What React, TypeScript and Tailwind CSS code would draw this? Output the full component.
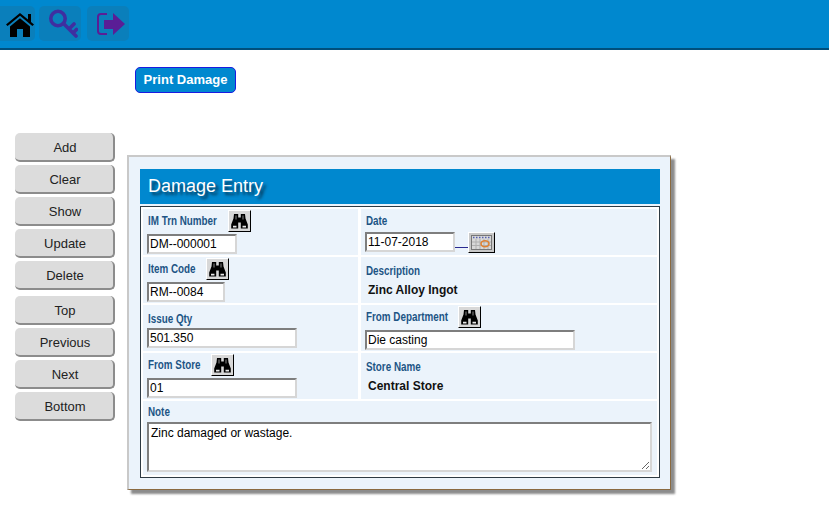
import React from "react";

const Tile = ({ children, className }: { children: React.ReactNode; className: string }) => (
  <div className={`flex h-[35px] items-center justify-center rounded-[5px] bg-[#0a7fbb] ${className}`}>{children}</div>
);

const SideBtn = ({ label, className }: { label: string; className?: string }) => (
  <button className={`h-[29px] w-[100px] rounded-[5px] border-r-2 border-b-2 border-[#8c8c8c] bg-[#dcdcdc] pl-[2px] pt-[2px] text-center text-[13px] leading-[24px] text-[#222] ${className ?? ""}`}>
    {label}
  </button>
);

const Bino = () => (
  <button className="flex h-[22px] w-[23px] items-center justify-center border border-t-white border-l-white border-r-black border-b-black bg-[#d8d8d8]">
    <svg viewBox="0 0 17 15" className="h-[16px] w-[17px]">
      <path d="M3 0.5 H7.2 V4 H9.8 V0.5 H14 L14.5 5 L16.8 11 V15 H9.8 V9 H7.2 V15 H0.2 V11 L2.5 5 Z" fill="#000" />
      <path d="M2 12.2 H5.5 V14 H2 Z M11.5 12.2 H15 V14 H11.5 Z" fill="#e8e8e8" />
      <path d="M5 2 V6 M12 2 V6" stroke="#8a8a8a" strokeWidth="1" />
    </svg>
  </button>
);

const Label = ({ children, w }: { children: React.ReactNode; w?: string }) => (
  <span className={`block shrink-0 pl-[1px] text-[12px] leading-[14px] font-bold whitespace-nowrap text-[#1d5585] ${w ?? ""}`}>
    <span className="inline-block origin-left scale-x-[0.82]">{children}</span>
  </span>
);

const Input = ({ value, className }: { value: string; className: string }) => (
  <input
    readOnly
    value={value}
    className={`block h-[20px] border-2 border-t-[#7e7e7e] border-l-[#7e7e7e] border-r-[#d6d6d6] border-b-[#d6d6d6] bg-white px-[1px] text-[12px] leading-[16px] text-black outline-none ${className}`}
  />
);

const Static = ({ value }: { value: string }) => (
  <div className="mt-[4px] pl-[3px] text-[12px] leading-[16px] font-bold text-[#111]">{value}</div>
);

const Cell = ({ children }: { children: React.ReactNode }) => (
  <div className="h-[46px] bg-[#ebf3fb] pl-[4px]">{children}</div>
);

const Row = ({ children }: { children: React.ReactNode }) => (
  <div className="grid grid-cols-[215px_296px] gap-[3px]">{children}</div>
);

const BinoHead = ({ label, w }: { label: string; w: string }) => (
  <div className="flex h-[25px] items-start pt-[1px]">
    <span className="mb-[3px] self-center"><Label w={w}>{label}</Label></span>
    <Bino />
  </div>
);

export default function App() {
  return (
    <div className="h-[505px] w-[829px] overflow-hidden bg-white font-['Liberation_Sans',Arial,sans-serif]">
      <header className="flex h-[50px] gap-[4px] border-b-2 border-[#004f7c] bg-[#0088cf] pt-[6px]">
        <Tile className="w-[35px] rounded-l-none">
          <svg viewBox="0 0 28 26" className="ml-[5px] h-[26px] w-[28px]">
            <path d="M14 2 L22 8.5 V3 H25 V11 L28 13.6 L26.4 15 L14 4.8 L1.6 15 L0 13.6 Z" fill="#000" />
            <path d="M14 7.2 L24 15.4 V26 H17 V18 H11 V26 H4 V15.4 Z" fill="#000" />
          </svg>
        </Tile>
        <Tile className="w-[42px]">
          <svg viewBox="0 0 30 29" className="ml-[6px] h-[29px] w-[30px]" fill="none" stroke="#3f2ea0" strokeWidth="3.6" strokeLinecap="round">
            <circle cx="10" cy="9.5" r="7.2" />
            <path d="M15.5 14.5 L28 27 M21 20 L26 15 M25 24 L28.5 20.5" />
          </svg>
        </Tile>
        <Tile className="ml-[2px] w-[42px]">
          <svg viewBox="0 0 28 22" className="ml-[6px] h-[22px] w-[28px]">
            <path d="M10 1 H4 Q1 1 1 4 V18 Q1 21 4 21 H10" fill="none" stroke="#5a1e96" strokeWidth="2" />
            <path d="M7 7 H16 V0 L28 11 L16 22 V16 H7 Z" fill="#5a1e96" />
          </svg>
        </Tile>
      </header>

      <div className="ml-[135px] mt-[17px] flex h-[26px] w-[101px] items-center justify-center rounded-[5px] border border-[#1a1ae0] bg-[#0088cf] text-[13px] font-bold text-white">
        Print Damage
      </div>

      <div className="mt-[40px] flex items-start pl-[15px]">
        <aside className="flex w-[100px] flex-col gap-[3px]">
          <SideBtn label="Add" />
          <SideBtn label="Clear" />
          <SideBtn label="Show" />
          <SideBtn label="Update" />
          <SideBtn label="Delete" />
          <SideBtn label="Top" className="mt-[3px]" />
          <SideBtn label="Previous" />
          <SideBtn label="Next" />
          <SideBtn label="Bottom" />
        </aside>

        <section className="ml-[12px] mt-[22px] h-[335px] w-[544px] border-t-2 border-l-2 border-t-[#c9c9c9] border-l-[#c9c9c9] border-r border-b border-r-[#8a6a40] border-b-[#8a6a40] bg-[#ebf3fb] pl-[11px] pt-[12px] shadow-[4px_4px_2px_#8c8c8c]">
          <h1 className="h-[35px] w-[520px] bg-[#0088cf] pl-[8px] text-[18px] leading-[34px] font-normal text-white [text-shadow:3px_3px_3px_#063350]">
            Damage Entry
          </h1>
          <div className="mt-[2px] flex h-[272px] w-[520px] flex-col gap-[2px] border border-[#2d3a44] bg-white p-[2px]">
            <Row>
              <Cell>
                <BinoHead label="IM Trn Number" w="w-[81px]" />
                <Input value="DM--000001" className="w-[90px]" />
              </Cell>
              <Cell>
                <div className="flex h-[23px] items-center"><Label>Date</Label></div>
                <div className="flex items-start">
                  <Input value="11-07-2018" className="w-[90px]" />
                  <div className="mt-[15px] h-px w-[13px] bg-[#2a2a90]" />
                  <button className="flex h-[21px] w-[27px] items-center justify-center border border-t-white border-l-white border-r-black border-b-black bg-[#c8c8c8]">
                    <svg viewBox="0 0 21 15" className="h-[15px] w-[21px]">
                      <rect x="0.5" y="0.5" width="20" height="14" fill="#d8d8d8" stroke="#777" />
                      <path d="M2 2.5 H19" stroke="#5560b0" strokeWidth="1.5" strokeDasharray="1.5 1.5" />
                      <path d="M5 4 V14 M9 4 V14 M13 4 V14 M17 4 V14 M1 7 H20 M1 10.5 H20" stroke="#b0b0b0" strokeWidth="1" />
                      <ellipse cx="14" cy="8.8" rx="4" ry="3" fill="none" stroke="#e08030" strokeWidth="1.6" />
                    </svg>
                  </button>
                </div>
              </Cell>
            </Row>
            <Row>
              <Cell>
                <BinoHead label="Item Code" w="w-[59px]" />
                <Input value="RM--0084" className="w-[78px]" />
              </Cell>
              <Cell>
                <div className="flex h-[21px] items-end"><Label>Description</Label></div>
                <Static value="Zinc Alloy Ingot" />
              </Cell>
            </Row>
            <Row>
              <Cell>
                <div className="flex h-[22px] items-end pb-[1px]"><Label>Issue Qty</Label></div>
                <Input value="501.350" className="mt-[1px] w-[150px]" />
              </Cell>
              <Cell>
                <BinoHead label="From Department" w="w-[93px]" />
                <Input value="Die casting" className="w-[210px]" />
              </Cell>
            </Row>
            <Row>
              <Cell>
                <BinoHead label="From Store" w="w-[64px]" />
                <Input value="01" className="w-[150px]" />
              </Cell>
              <Cell>
                <div className="flex h-[21px] items-end"><Label>Store Name</Label></div>
                <Static value="Central Store" />
              </Cell>
            </Row>
            <div className="h-[74px] bg-[#ebf3fb] pl-[4px] pt-[4px]">
              <Label>Note</Label>
              <textarea
                readOnly
                value="Zinc damaged or wastage."
                className="mt-[3px] block h-[50px] w-[505px] border-2 border-t-[#7e7e7e] border-l-[#7e7e7e] border-r-[#d6d6d6] border-b-[#d6d6d6] bg-white px-[2px] pt-[2px] text-[12px] leading-[14px] text-black outline-none"
              />
            </div>
          </div>
        </section>
      </div>
    </div>
  );
}
